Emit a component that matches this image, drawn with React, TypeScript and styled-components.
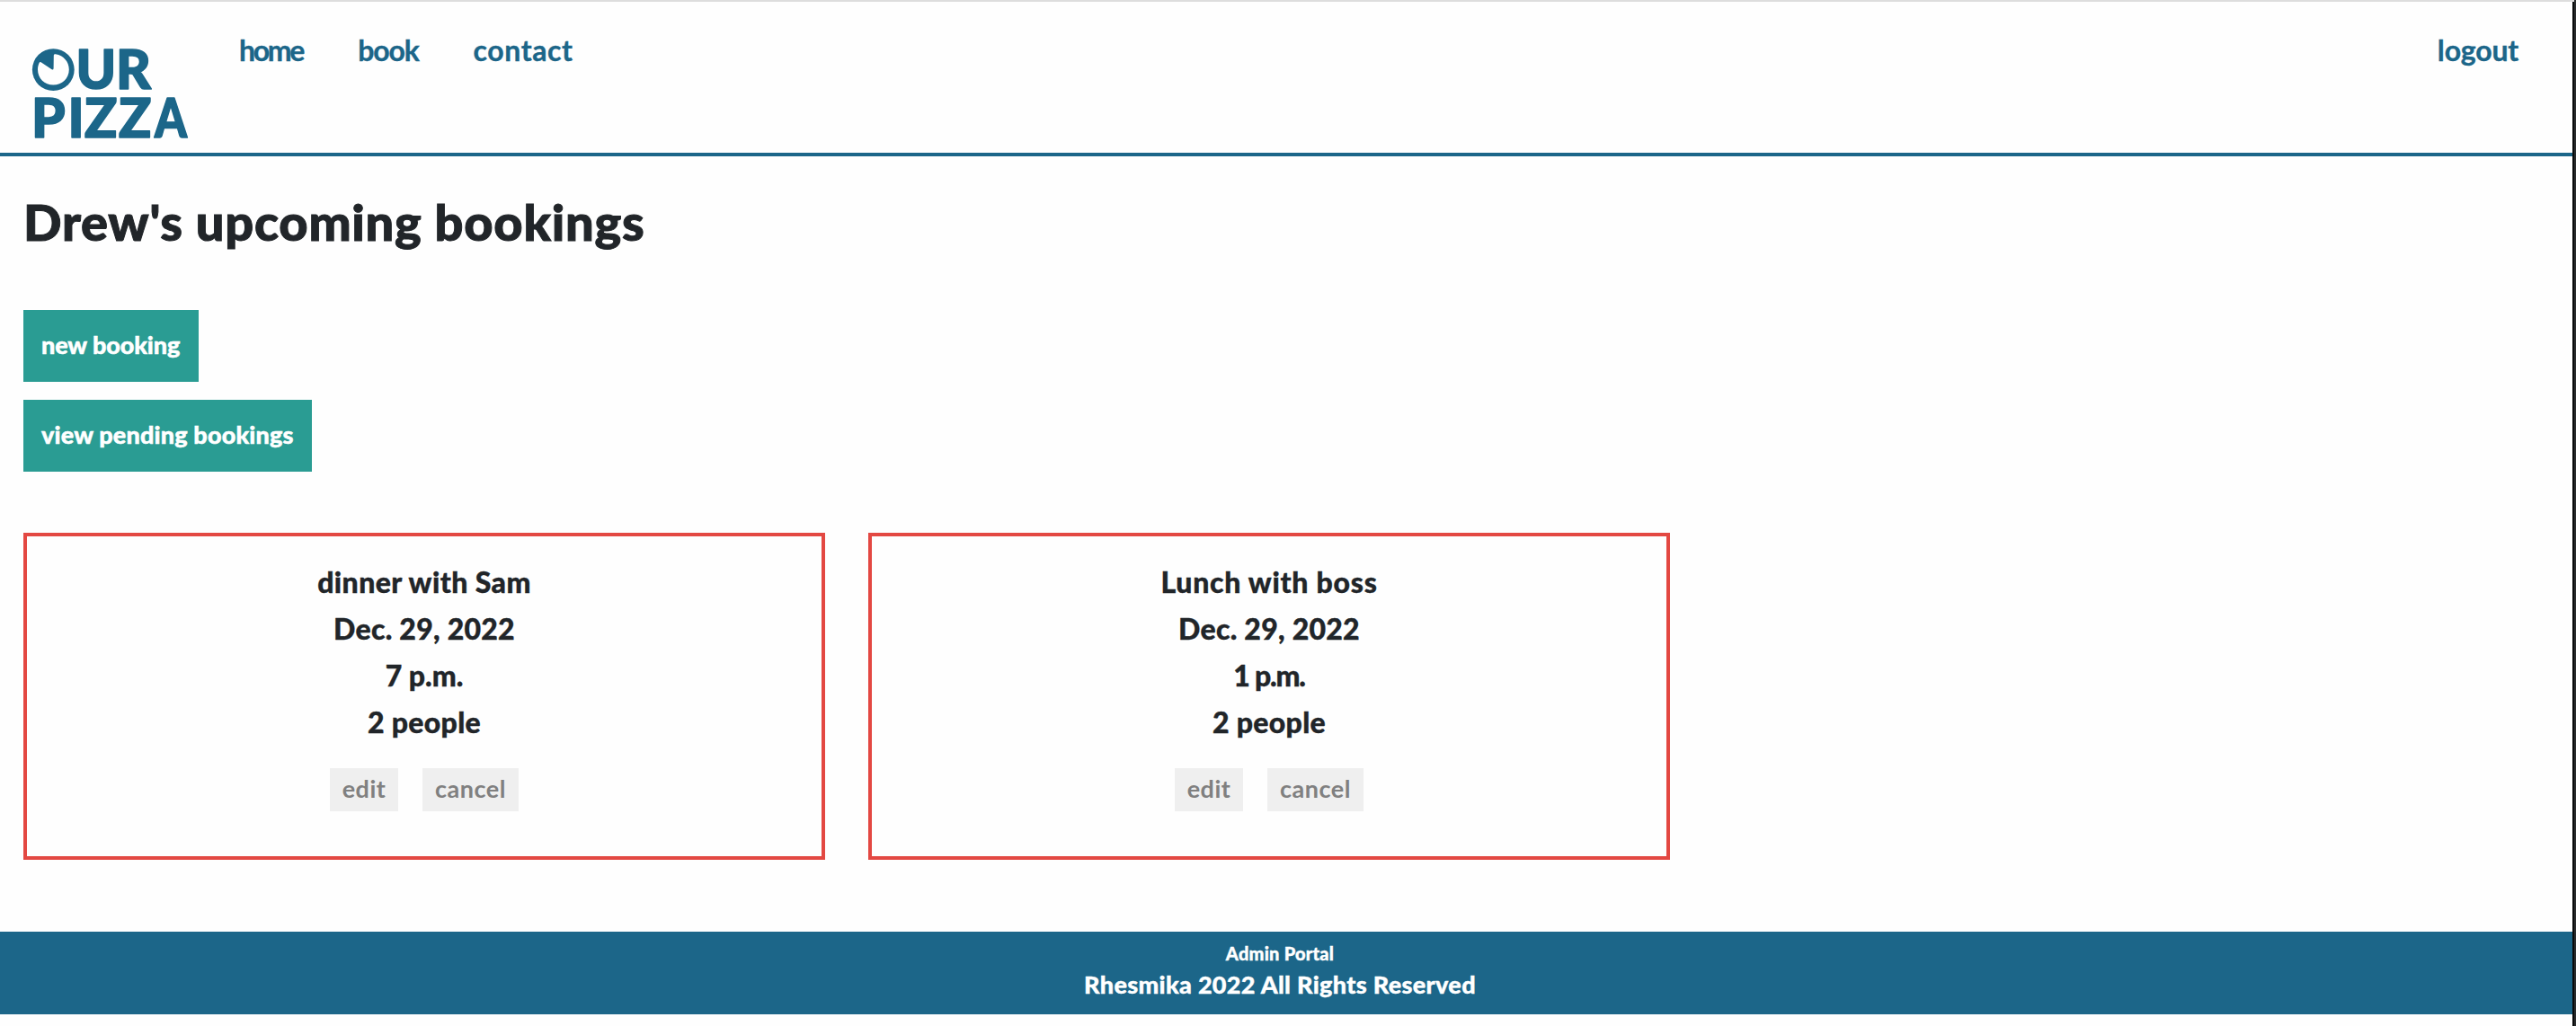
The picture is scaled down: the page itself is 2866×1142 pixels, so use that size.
import React from 'react';
import styled, { createGlobalStyle } from 'styled-components';

const blue = '#1c6689';
const ink = '#212529';

const GlobalStyle = createGlobalStyle`
  * { box-sizing: border-box; }
  body {
    margin: 0;
    background: #fefefe;
    color: ${ink};
    font-family: Lato, "Open Sans", sans-serif;
  }
  h1, h2, p { margin: 0; }
  a { color: inherit; text-decoration: none; }
`;

const Window = styled.div`
  height: 1142px;
  overflow: hidden;
  border-right: 2px solid #292c2d;
`;

const Page = styled.div`
  height: 100%;
  display: flex;
  flex-direction: column;
  border-top: 2px solid #dddddd;
  box-shadow: inset -2px 0 0 #090b0c;
  padding-right: 2px;
`;

const Header = styled.header`
  display: flex;
  height: 172px;
  flex: none;
  border-bottom: 4px solid ${blue};
  color: ${blue};
`;

const Logo = styled.svg`
  display: block;
  width: 266px;
  height: 168px;
  flex: none;
  font-family: Lato, sans-serif;
  font-weight: 900;
  font-size: 60px;
`;

const Nav = styled.nav`
  flex: 1;
  display: flex;
  gap: 61px;
  padding: 30px 60px 0 0;
`;

const NavLink = styled.a<{ $spacing: number; $end?: boolean }>`
  font-size: 32px;
  font-weight: 700;
  line-height: 48px;
  height: 48px;
  letter-spacing: ${(p) => p.$spacing}px;
  -webkit-text-stroke: 0.4px currentColor;
  margin-left: ${(p) => (p.$end ? 'auto' : '0')};
`;

const Main = styled.main`
  flex: none;
  height: 863px;
  padding: 39px 26px 0;
`;

const Title = styled.h1`
  font-size: 56px;
  font-weight: 900;
  line-height: 68px;
  letter-spacing: 0.72px;
  -webkit-text-stroke: 1px currentColor;
`;

const Actions = styled.div`
  display: flex;
  flex-direction: column;
  align-items: flex-start;
  gap: 20px;
  margin-top: 64px;
`;

const ActionLink = styled.a<{ $width: number; $spacing: number }>`
  width: ${(p) => p.$width}px;
  height: 80px;
  padding-left: 20px;
  background: #2a9c93;
  color: #ffffff;
  font-size: 27px;
  font-weight: 900;
  line-height: 78px;
  white-space: nowrap;
  letter-spacing: ${(p) => p.$spacing}px;
  -webkit-text-stroke: 0.5px currentColor;
`;

const Cards = styled.section`
  display: flex;
  gap: 48px;
  margin-top: 68px;
`;

const Card = styled.article`
  width: 892px;
  height: 364px;
  padding-top: 25px;
  border: 4px solid #e34842;
  text-align: center;
`;

const Line = styled.p<{ $spacing: number }>`
  font-size: 32px;
  font-weight: 900;
  line-height: 52px;
  letter-spacing: ${(p) => p.$spacing}px;
  -webkit-text-stroke: 0.4px currentColor;
`;

const CardActions = styled.div`
  display: flex;
  justify-content: center;
  gap: 27px;
  margin-top: 25px;
`;

const SmallButton = styled.a<{ $width: number }>`
  width: ${(p) => p.$width}px;
  height: 48px;
  background: #efefef;
  color: #808080;
  font-size: 27px;
  font-weight: 700;
  line-height: 46px;
  letter-spacing: 0.5px;
`;

const Footer = styled.footer`
  flex: none;
  height: 92px;
  padding: 9px 14px 0 0;
  background: ${blue};
  color: #ffffff;
  text-align: center;
  font-weight: 900;
  -webkit-text-stroke: 0.4px currentColor;
`;

const Portal = styled.p`
  font-size: 20px;
  line-height: 30px;
  letter-spacing: 0.24px;
`;

const Rights = styled.p`
  font-size: 27px;
  line-height: 40px;
  letter-spacing: 0.33px;
`;

type Booking = { lines: { text: string; spacing: number }[] };

const bookings: Booking[] = [
  {
    lines: [
      { text: 'dinner with Sam', spacing: 0.43 },
      { text: 'Dec. 29, 2022', spacing: 0.25 },
      { text: '7 p.m.', spacing: 0 },
      { text: '2 people', spacing: 0.31 },
    ],
  },
  {
    lines: [
      { text: 'Lunch with boss', spacing: 0.74 },
      { text: 'Dec. 29, 2022', spacing: 0.25 },
      { text: '1 p.m.', spacing: -1.2 },
      { text: '2 people', spacing: 0.31 },
    ],
  },
];

export default function App() {
  return (
    <>
      <GlobalStyle />
      <Window>
        <Page>
          <Header>
            <Logo viewBox="0 2 266 168" fill={blue}>
              <circle cx="59.3" cy="77.6" r="23.4" />
              <path
                d="M45.6 69.2 L57.6 77.2 Q59.4 78.2 59.6 76 L59.8 61.6 Q60 60 61.8 60.3 C70.8 61.6 76.8 69 76.8 77.4 C76.8 87 69 94.6 59.3 94.6 C49.6 94.6 42 87 42 77.4 C42 74.4 42.6 72 43.6 69.9 Q44.4 68.5 45.6 69.2 Z"
                fill="#fefefe"
              />
              <g stroke={blue} strokeWidth="1.6" strokeLinejoin="round">
                <text x="84.5 129" y="98.5">UR</text>
                <text x="35 75.5 94 132" y="153.2">
                  PIZZ<tspan x="172" textLength="36" lengthAdjust="spacingAndGlyphs">A</tspan>
                </text>
              </g>
            </Logo>
            <Nav>
              <NavLink $spacing={-2.3}>home</NavLink>
              <NavLink $spacing={-1.14}>book</NavLink>
              <NavLink $spacing={0.6}>contact</NavLink>
              <NavLink $spacing={-0.17} $end>logout</NavLink>
            </Nav>
          </Header>
          <Main>
            <Title>Drew's upcoming bookings</Title>
            <Actions>
              <ActionLink $width={195} $spacing={-0.1}>new booking</ActionLink>
              <ActionLink $width={321} $spacing={0.17}>view pending bookings</ActionLink>
            </Actions>
            <Cards>
              {bookings.map((booking, i) => (
                <Card key={i}>
                  {booking.lines.map((line) => (
                    <Line key={line.text} $spacing={line.spacing}>{line.text}</Line>
                  ))}
                  <CardActions>
                    <SmallButton $width={76}>edit</SmallButton>
                    <SmallButton $width={107}>cancel</SmallButton>
                  </CardActions>
                </Card>
              ))}
            </Cards>
          </Main>
          <Footer>
            <Portal>Admin Portal</Portal>
            <Rights>Rhesmika 2022 All Rights Reserved</Rights>
          </Footer>
        </Page>
      </Window>
    </>
  );
}
